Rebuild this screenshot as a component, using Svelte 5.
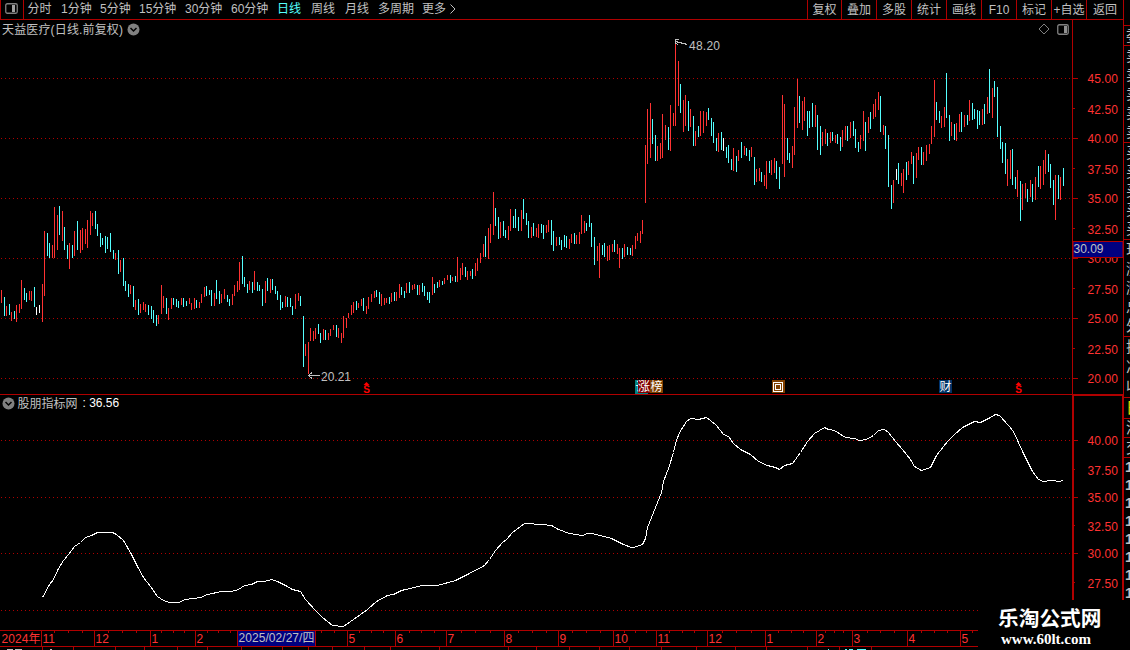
<script lang="ts">
  const periods = [
    { label: '分时', width: 33.5 },
    { label: '1分钟', width: 39 },
    { label: '5分钟', width: 39 },
    { label: '15分钟', width: 46 },
    { label: '30分钟', width: 46 },
    { label: '60分钟', width: 46 },
    { label: '日线', width: 34, active: true },
    { label: '周线', width: 34 },
    { label: '月线', width: 33 },
    { label: '多周期', width: 44 },
    { label: '更多', width: 27 },
  ];

  const tools = [
    { label: '复权', width: 34 },
    { label: '叠加', width: 35 },
    { label: '多股', width: 35 },
    { label: '统计', width: 35 },
    { label: '画线', width: 35 },
    { label: 'F10', width: 35 },
    { label: '标记', width: 35 },
    { label: '+自选', width: 35 },
    { label: '返回', width: 37 },
  ];

  // colour, x, high, low
  const rawBars = `
r1,290,303 c4,297,316 r6,306,316 c9,304,315 r11,312,321 c14,311,319 r16,305,322 r19,304,313 r21,280,309 c24,288,300
c26,293,302 r29,291,300 r31,291,301 c34,287,307 w36,307,315 w39,305,313 r42,284,322 r44,231,296 c47,233,256 c49,243,258
r52,245,258 r54,207,258 r57,215,250 c59,206,235 r62,211,241 c64,227,250 c67,245,259 r69,243,269 c72,245,258 r74,231,256
c77,221,250 r80,230,253 r82,228,250 r85,229,244 r87,220,248 r90,211,235 r92,213,226 c95,211,229 c97,224,236 c100,233,247
c102,238,245 c105,236,253 c107,237,249 c110,233,252 c113,250,259 r115,253,260 c118,250,274 r120,260,272 c123,258,286
c125,281,291 c128,284,297 r130,285,294 c133,286,307 r135,300,310 c138,299,315 r140,304,313 r143,302,310 r145,304,312
c148,305,315 c151,306,319 c153,310,323 c156,315,326 r158,315,324 r161,285,314 r163,296,308 c166,298,314 r168,308,320
r171,298,309 c173,298,305 c176,299,307 c178,301,308 r181,298,305 c183,298,307 c186,301,306 r189,298,304 r191,303,310
r194,298,309 c196,300,308 r199,302,308 r201,294,303 r204,287,297 c206,286,296 c209,290,295 c211,290,306 r214,293,306
c216,280,299 c219,291,304 r221,294,303 r224,289,299 c227,295,302 c229,299,306 r232,294,305 r234,285,296 r237,281,292
r239,262,290 c242,256,284 c244,277,287 c247,284,293 r249,281,290 c252,282,293 r254,271,290 c257,282,291 c259,285,291
c262,289,306 r265,281,303 c267,278,291 r270,279,293 c272,279,290 c275,286,294 c277,291,300 c280,295,310 c282,302,308
r285,296,307 c287,297,307 c290,298,307 c292,306,315 r295,294,309 r298,293,301 c300,296,306 c303,316,367 r305,344,356
r308,342,374 r310,328,341 r313,331,341 r315,328,339 c318,324,334 c320,333,343 r323,329,340 c325,330,340 r328,333,340
r330,329,336 r333,325,330 c336,325,337 r338,328,338 r341,333,343 r343,316,338 r346,318,328 r348,313,318 r351,305,315
r353,302,313 c356,301,310 r358,303,308 r361,299,306 c363,298,311 r366,306,314 r368,297,309 r371,294,302 r374,291,298
c376,290,297 c379,292,304 r381,294,306 r384,298,305 r386,298,303 c389,297,304 r391,293,302 c394,292,301 r396,292,301
r399,284,298 c401,287,295 c404,291,298 r406,283,293 c409,282,293 r412,285,290 r414,284,289 c417,285,295 r419,285,295
c422,283,292 c424,286,296 c427,292,300 c429,292,303 r432,277,295 c434,284,293 c437,282,288 r439,280,287 c442,281,285
r444,278,284 r447,275,280 c450,275,283 r452,277,281 c455,276,282 r457,257,282 r460,268,280 r462,263,275 c465,267,277
r467,271,280 r470,271,276 c472,269,279 r475,263,276 r477,258,271 r480,253,263 r483,244,257 c485,236,257 r488,228,259
r490,224,243 r493,192,235 c495,208,226 c498,217,239 r500,222,238 c503,221,236 c505,230,238 r508,226,240 r510,209,231
c513,216,228 c515,209,228 c518,217,231 r521,210,231 c523,199,219 c526,213,225 c528,221,238 r531,227,238 c533,223,236
r536,228,237 r538,224,238 c541,224,233 c543,225,239 r546,225,233 r548,220,232 c551,220,245 c553,231,251 r556,237,246
c559,237,245 c561,240,250 c564,235,247 c566,236,248 r569,239,249 r571,234,243 c574,233,244 r576,235,244 r579,232,244
r581,215,234 r584,221,233 c586,223,231 c589,215,227 c591,223,247 c594,237,265 r597,246,261 r599,243,278 c602,245,255
c604,243,257 r607,246,261 r609,245,260 r612,244,252 c614,240,252 r617,244,254 r619,248,268 c622,248,259 r624,244,257
c627,247,255 c630,248,255 r632,245,256 r635,236,249 r637,233,241 r640,231,243 r642,220,234 r645,145,203 r647,109,164
r650,103,158 c652,119,144 c655,135,161 r657,146,161 r660,143,159 r662,114,158 r665,125,140 c668,127,150 r670,105,151
r673,113,126 r675,42,126 r678,61,106 c680,84,113 r683,100,132 r685,95,126 c688,101,131 r690,109,127 c693,116,146
r695,131,146 c698,126,137 r700,111,136 r703,111,133 r706,112,126 c708,108,120 c711,118,136 c713,122,143 c716,138,151
r718,133,152 c721,132,150 w723,138,151 c726,147,158 c728,145,163 c731,159,170 r733,148,171 c736,156,172 r738,150,161
c741,142,158 r744,146,155 c746,148,156 c749,150,161 r751,147,157 c754,157,185 r756,169,182 r759,168,181 c761,172,182
r764,175,186 r766,161,189 c769,161,173 r771,160,175 r774,158,173 c776,161,179 c779,167,189 r782,95,164 r784,104,177
c787,138,160 c789,153,163 r792,146,168 r794,107,155 r797,79,128 c799,96,123 r802,101,130 r804,97,121 c807,111,136
c809,111,128 c812,103,127 r815,105,127 c817,115,150 c820,126,155 r822,132,146 r825,129,144 c827,133,146 r830,132,143
c832,132,141 r835,135,143 c837,134,144 c840,137,151 r842,130,147 r845,126,140 c847,126,141 r850,122,138 c853,121,136
c855,129,148 c858,142,152 r860,135,149 r863,111,141 c865,122,151 r868,117,133 c870,112,129 r873,104,119 r875,99,117
r878,92,110 c880,96,132 r883,125,135 c885,126,149 c888,135,187 c891,185,209 r893,180,203 w896,169,180 c898,163,184
r901,173,186 r903,169,193 c906,162,180 r908,161,175 r911,152,164 c913,156,184 r916,153,178 r918,147,160 c921,147,165
r923,152,165 r926,145,161 r929,144,154 r931,126,144 r934,80,137 c936,102,120 c939,111,123 r941,116,128 r944,107,127
c946,73,118 c949,115,141 r951,122,136 c954,124,140 r956,123,141 r959,114,132 c961,112,132 r964,115,127 c967,115,125
r969,100,121 c972,103,120 c974,109,119 c977,110,129 c979,111,125 r982,109,125 c984,104,124 r987,97,114 c989,69,113
r992,88,118 c994,81,97 c997,87,137 c1000,126,149 c1002,142,163 c1005,143,174 r1007,159,186 r1010,150,179 c1012,149,185
c1015,177,189 r1017,170,197 c1020,181,221 r1022,184,210 r1025,183,198 c1027,189,202 r1030,180,197 c1032,184,202
r1035,177,200 c1038,166,187 r1040,166,189 r1043,160,185 r1045,150,174 c1048,154,172 c1050,164,188 c1053,180,205
r1055,175,220 c1058,175,199 r1060,177,200 c1063,168,186`;

  const kinds: Record<string, string> = { r: 'up', c: 'down', w: 'flat' };
  const bars = rawBars.trim().split(/\s+/).map((b) => {
    const [x, high, low] = b.slice(1).split(',').map(Number);
    return { kind: kinds[b[0]], x, high, low };
  });

  const average =
    '42,597 49,584 53,579 58,568 63,560 68,554 74,546 80,542 85,537 91,535 97,532 112,532 116,534 123,540 131,554 ' +
    '137,566 143,577 150,586 157,596 163,600 169,602 178,602 185,599 200,597 207,594 221,591 231,591 238,589 244,585 ' +
    '251,584 257,581 264,581 271,579 277,581 285,585 292,589 300,591 305,599 315,610 322,617 332,625 343,626 353,619 ' +
    '367,609 376,601 387,595 393,594 401,590 422,585 437,585 455,580 467,574 484,565 489,559 495,550 502,542 506,539 ' +
    '512,532 524,523 542,524 551,525 558,529 569,533 582,535 587,533 592,533 611,538 623,544 631,547 633,547 642,544 ' +
    '645,538 647,527 653,512 661,492 663,481 668,468 673,452 676,440 679,432 686,421 690,418 698,419 706,417 710,420 ' +
    '716,425 723,434 728,436 733,443 740,449 750,454 758,461 767,465 775,467 779,469 784,465 792,463 800,452 807,441 ' +
    '814,433 824,427 828,429 834,430 845,437 854,438 859,440 866,439 873,435 878,430 884,429 888,432 895,441 902,449 ' +
    '910,459 914,466 921,470 930,467 936,455 947,441 954,434 962,427 968,424 974,421 980,422 990,417 995,414 999,415 ' +
    '1008,425 1013,431 1017,440 1023,453 1032,471 1038,479 1043,481 1050,480 1060,481 1063,479';

  const priceScale = [
    { y: 78, text: '45.00' }, { y: 109, text: '42.50' }, { y: 138, text: '40.00' }, { y: 169, text: '37.50' },
    { y: 198, text: '35.00' }, { y: 229, text: '32.50' }, { y: 258, text: '30.00' }, { y: 289, text: '27.50' },
    { y: 318, text: '25.00' }, { y: 349, text: '22.50' }, { y: 378, text: '20.00' },
  ];
  const averageScale = [
    { y: 440, text: '40.00' }, { y: 470, text: '37.50' }, { y: 497, text: '35.00' },
    { y: 526, text: '32.50' }, { y: 553, text: '30.00' }, { y: 583, text: '27.50' },
  ];

  const months = [
    { x: 41, text: '11' }, { x: 94, text: '12' }, { x: 150, text: '1' }, { x: 195, text: '2' },
    { x: 347, text: '5' }, { x: 395, text: '6' }, { x: 446, text: '7' }, { x: 504, text: '8' },
    { x: 558, text: '9' }, { x: 613, text: '10' }, { x: 656, text: '11' }, { x: 707, text: '12' },
    { x: 765, text: '1' }, { x: 816, text: '2' }, { x: 852, text: '3' }, { x: 907, text: '4' }, { x: 960, text: '5' },
  ];
  const weekTicks = [
    54, 68, 82, 108, 122, 136, 161, 173, 184, 207, 218, 230, 321, 334, 359, 371, 383, 409, 421, 434, 461, 475, 490,
    518, 532, 546, 572, 586, 600, 624, 635, 646, 669, 682, 694, 722, 736, 751, 778, 791, 803, 825, 834, 843, 867,
    880, 894, 921, 934, 947, 972,
  ];
  const tabTicks = [
    42, 73, 115, 144, 177, 207, 241, 282, 308, 332, 364, 390, 439, 508, 536, 569, 599, 629, 661, 696, 735, 766, 807,
    839, 871,
  ];

  const quoteRows = [
    { height: 6, lines: [] },
    { height: 20, lines: ['委'] },
    { height: 97, lines: ['卖', '卖', '卖', '卖', '卖'] },
    { height: 97, lines: ['买', '买', '买', '买', '买'] },
    { height: 97, lines: ['现', '涨', '涨', '总', '外'] },
    { height: 61, lines: ['换', '净', '收'] },
    { height: 21, lines: ['日'], bright: true },
    { height: 19, lines: ['港'] },
    { height: 20, lines: ['交'] },
  ];
</script>

<div class="terminal">
  <div class="toolbar">
    <div class="layout-toggle">
      <svg width="13" height="11" viewBox="0 0 13 11">
        <rect x="0.75" y="0.75" width="11.5" height="9.5" rx="1.5" fill="none" stroke="#808080" stroke-width="1.3" />
        <rect x="7" y="2" width="3" height="7" fill="#a0a0a0" />
      </svg>
    </div>
    <div class="periods">
      {#each periods as p}
        <span class="period" class:active={p.active} style="width: {p.width}px">{p.label}</span>
      {/each}
      <svg width="7" height="10" viewBox="0 0 7 10"><path d="M1.5 0.5 L6 5 L1.5 9.5" fill="none" stroke="#c0c0c0" /></svg>
    </div>
    <div class="tools">
      {#each tools as t}
        <span class="tool" style="width: {t.width}px">{t.label}</span>
      {/each}
    </div>
  </div>

  <div class="body">
    <div class="panels">
      <svg class="plot" width="1123" height="630" viewBox="0 20 1123 630">
        <g class="grid">
          {#each [78, 138, 198, 258, 318, 378, 440, 497, 553, 610] as y}
            <line x1="1" x2={y === 610 ? 978 : 1071} y1={y + 0.5} y2={y + 0.5} />
          {/each}
        </g>

        <g class="bars">
          {#each bars as b}
            <rect class={b.kind} x={b.x} y={b.high} width="1" height={b.low - b.high} />
          {/each}
        </g>
        <polyline class="average" points={average} transform="translate(0.5 0.5)" />

        <!-- high and low marks -->
        <path class="pointer" d="M687.5 44.5 L675.5 41.5 M679 39.5 H675.5 V43 L678 45" />
        <text class="note" x="689" y="50" textLength="31">48.20</text>
        <path class="pointer" d="M320 375.5 H308 M312 372.5 L308.5 375.5 L312 378.5" />
        <text class="note" x="321" y="381" textLength="30">20.21</text>

        <!-- event badges -->
        {#each [366, 1018] as x}
          <path class="dividend-cap" d="M{x - 2.5} 385 L{x + 0.5} 382 L{x + 3.5} 385 Z" />
          <text class="dividend" x={x + 0.7} y="393">S</text>
        {/each}
        <rect x="635" y="380" width="13" height="14" fill="#008080" />
        <text class="badge" x="635.5" y="391">调</text>
        <rect x="638" y="380" width="12" height="13" fill="#800000" />
        <rect x="650" y="380" width="13" height="13" fill="#804000" />
        <text class="badge" x="638" y="391">涨</text>
        <text class="badge" x="650.5" y="391">榜</text>
        <rect x="772" y="380" width="13" height="13" fill="#804000" />
        <rect class="box" x="773.5" y="382.5" width="9" height="9" />
        <rect class="box" x="775.5" y="384.5" width="5" height="5" />
        <rect x="939" y="380" width="13" height="13" fill="#003366" />
        <text class="badge" x="939.5" y="391">财</text>

        <!-- frame and scales -->
        <g class="rule">
          <rect x="0" y="394" width="1072" height="1" />
          <rect x="1072" y="20" width="1" height="374" />
          <rect x="1072" y="394" width="51" height="2" />
          <rect x="1072" y="394" width="2" height="206" />
          <rect x="1122" y="394" width="1" height="206" />
          <rect x="0" y="630" width="978" height="1" />
          <rect x="0" y="646" width="978" height="1" />
          {#each [78, 138, 198, 258, 318, 378, 440, 497, 553] as y}
            <rect x="1073" {y} width="5" height="1" />
          {/each}
          {#each [108, 168, 228, 288, 348, 469, 525, 582] as y}
            <rect x="1073" {y} width="2" height="1" />
          {/each}
          {#each months as m}
            <rect x={m.x} y="631" width="1" height="15" />
          {/each}
          {#each weekTicks as x}
            <rect {x} y="631" width="1" height="2" />
          {/each}
          {#each tabTicks as x}
            <rect {x} y="647" width="1" height="3" />
          {/each}
        </g>
        {#each [...priceScale, ...averageScale] as s}
          <text class="scale" x="1087.5" y={s.y + 5} textLength="30.5">{s.text}</text>
        {/each}
        <text class="scale" x="1.5" y="643" textLength="39">2024年</text>
        {#each months as m}
          <text class="scale" x={m.x + 1.5} y="643">{m.text}</text>
        {/each}

        <rect class="cursor" x="1073" y="241.5" width="50" height="16" />
        <text class="note" x="1073.5" y="253" textLength="30">30.09</text>
        <rect class="cursor" x="237.5" y="630.5" width="78" height="16" />
        <text class="note" x="238.5" y="642" textLength="76">2025/02/27/四</text>

        <g class="tab-tops">
          <path d="M7 649.5 H13 M15 649.5 H22 M50 649.5 H52" stroke="#c0c0c0" />
          <path d="M828 649.5 H829 M845 649.5 H847 M849 649.5 H853 M857 649.5 H866" stroke="#54ffff" />
        </g>
      </svg>

      <div class="price-title">
        <span class="stock">天益医疗(日线.前复权)</span>
        <svg width="13" height="13" viewBox="0 0 13 13">
          <circle cx="6.5" cy="6.5" r="6" fill="#808080" />
          <path d="M3.5 5 L6.5 8 L9.5 5" fill="none" stroke="#000" stroke-width="1.5" />
        </svg>
        <span class="spacer"></span>
        <svg width="12" height="12" viewBox="0 0 12 12">
          <path d="M6 1 L11 6 L6 11 L1 6 Z" fill="none" stroke="#808080" />
        </svg>
        <svg class="pane-icon" width="12" height="11" viewBox="0 0 12 11">
          <rect x="0.75" y="0.75" width="10.5" height="9.5" rx="1.5" fill="none" stroke="#808080" stroke-width="1.3" />
          <rect x="7" y="2" width="3" height="7" fill="#909090" />
        </svg>
      </div>

      <div class="average-title">
        <svg width="13" height="13" viewBox="0 0 13 13">
          <circle cx="6.5" cy="6.5" r="6" fill="#808080" />
          <path d="M3.5 5 L6.5 8 L9.5 5" fill="none" stroke="#000" stroke-width="1.5" />
        </svg>
        <span class="indicator">股朋指标网</span>
        <span class="value">: 36.56</span>
      </div>
    </div>

    <div class="quotes">
      {#each quoteRows as row}
        <div class="quote-row" class:bright={row.bright} style="height: {row.height}px">
          {#each row.lines as l}<span>{l}</span>{/each}
        </div>
      {/each}
      <div class="ticks">
        {#each [1, 2, 3, 4, 5, 6, 7, 8] as i (i)}<span>1</span>{/each}
      </div>
    </div>
  </div>

  <div class="watermark">
    <div class="site">乐淘公式网</div>
    <div class="url">www.60lt.com</div>
  </div>
</div>

<style>
  :global(body) {
    background: #000;
    overflow: hidden;
  }

  .terminal {
    position: relative;
    width: 1130px;
    height: 650px;
    overflow: hidden;
    background: #000;
    color: #c0c0c0;
    font-family: 'Liberation Sans', 'Noto Sans CJK SC', sans-serif;
    font-size: 12px;
  }

  .toolbar {
    display: flex;
    width: 1124px;
    height: 20px;
    box-sizing: border-box;
    border-bottom: 1px solid #b00000;
    border-right: 1px solid #b00000;
    line-height: 18px;
    white-space: nowrap;
  }

  .layout-toggle {
    display: flex;
    align-items: center;
    width: 24px;
    box-sizing: border-box;
    padding: 0 0 2px 4px;
    border: solid #b00000;
    border-width: 0 1px;
  }

  .periods {
    display: flex;
    align-items: center;
    flex: 1;
    padding-left: 3.5px;
    padding-bottom: 1px;
  }

  .period.active {
    color: #54ffff;
  }

  .tools {
    display: flex;
  }

  .tool {
    box-sizing: border-box;
    padding-top: 1px;
    border-left: 1px solid #b00000;
    text-align: center;
  }

  .body {
    display: flex;
    height: 630px;
  }

  .panels {
    display: grid;
    grid-template-columns: 1123px;
    grid-template-rows: 375px 255px;
  }

  .plot {
    grid-area: 1 / 1 / 3 / 2;
    display: block;
  }

  .price-title,
  .average-title {
    display: flex;
    align-items: center;
    align-self: start;
    white-space: nowrap;
  }

  .price-title {
    grid-area: 1 / 1;
    height: 18px;
    padding: 0 54px 0 2px;
  }

  .stock {
    width: 125px;
    padding-bottom: 1px;
    letter-spacing: 0.15px;
  }

  .spacer {
    flex: 1;
  }

  .pane-icon {
    margin-left: 7px;
  }

  .average-title {
    grid-area: 2 / 1;
    height: 16px;
    padding-left: 1.5px;
  }

  .indicator {
    margin-left: 3px;
    padding-bottom: 1px;
  }

  .value {
    margin-left: 5px;
    color: #fff;
  }

  .grid line {
    stroke: #b00000;
    stroke-dasharray: 1 3;
    shape-rendering: crispEdges;
  }

  .bars,
  .rule,
  .tab-tops {
    shape-rendering: crispEdges;
  }

  .up {
    fill: #ff3232;
  }

  .down {
    fill: #54ffff;
  }

  .flat {
    fill: #fff;
  }

  .average {
    fill: none;
    stroke: #fff;
    shape-rendering: crispEdges;
  }

  .rule {
    fill: #b00000;
  }

  .scale {
    fill: #ff3232;
  }

  .note {
    fill: #c0c0c0;
  }

  .pointer {
    fill: none;
    stroke: #c0c0c0;
    shape-rendering: crispEdges;
  }

  .dividend {
    fill: #f00;
    font-weight: bold;
    font-size: 10px;
    text-anchor: middle;
  }

  .dividend-cap {
    fill: #f00;
  }

  .badge {
    fill: #fff;
    font-size: 12px;
  }

  .box {
    fill: none;
    stroke: #fff;
    shape-rendering: crispEdges;
  }

  .cursor {
    fill: #000080;
    stroke: #b00000;
  }

  .quotes {
    width: 7px;
    box-sizing: border-box;
    border-left: 1px solid #b00000;
    overflow: hidden;
  }

  .quote-row {
    display: flex;
    flex-direction: column;
    justify-content: space-around;
    box-sizing: border-box;
    border-bottom: 1px solid #b00000;
    padding-left: 2px;
    font-size: 15px;
    line-height: 18px;
    overflow: hidden;
  }

  .quote-row.bright {
    color: #e0e000;
  }

  .ticks {
    display: flex;
    flex-direction: column;
    padding-left: 1px;
    font-size: 15px;
    font-weight: bold;
    line-height: 18px;
  }

  .watermark {
    position: absolute;
    right: 0;
    bottom: 0;
    width: 152px;
    height: 50px;
    box-sizing: border-box;
    padding: 7px 0 0 20px;
    background: #000;
    color: #fff;
    font-weight: bold;
    white-space: nowrap;
  }

  .site {
    font-size: 20.7px;
    line-height: 24px;
  }

  .url {
    padding-left: 3px;
    font-family: 'Liberation Serif', serif;
    font-size: 15px;
    line-height: 17px;
  }
</style>
